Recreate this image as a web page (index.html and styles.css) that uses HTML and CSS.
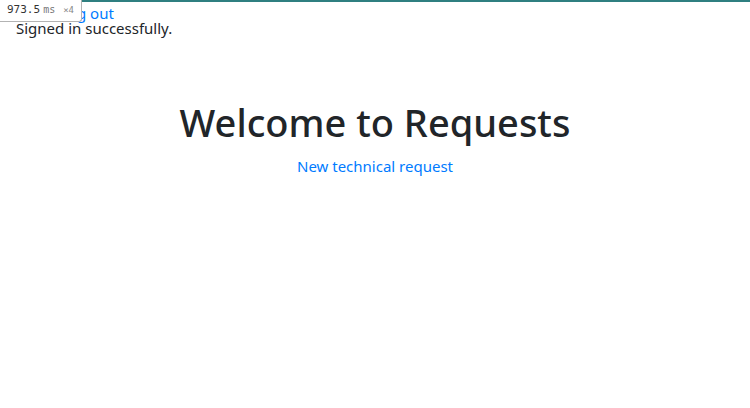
FILE: index.html
```html
<!DOCTYPE html>
<html>
<head>
<meta charset="utf-8">
<link rel="stylesheet" href="styles.css">
</head>
<body>
<div class="topline"></div>
<div class="profiler"><span class="ms-num">973.5</span><span class="ms-unit">ms</span><span class="ms-count">×4</span></div>
<div class="container">
  <nav class="nav"><a class="link" href="#">Log out</a></nav>
  <p class="notice">Signed in successfully.</p>
  <main class="hero">
    <h1 class="title">Welcome to Requests</h1>
    <a class="link link-main" href="#">New technical request</a>
  </main>
</div>
</body>
</html>
```
FILE: styles.css
```css
html, body { margin: 0; padding: 0; background: #fff; }
body {
  font-family: "Noto Sans", "Open Sans", sans-serif;
  font-size: 15px;
  line-height: 15px;
  color: #212529;
}
.topline { height: 2px; background: #2f7f80; }
.profiler {
  position: absolute;
  top: 0; left: 0;
  z-index: 1;
  display: flex;
  align-items: baseline;
  background: #fff;
  border-right: 1px solid #b3b3b3;
  border-bottom: 1px solid #b3b3b3;
  border-bottom-right-radius: 3px;
  padding: 3px 7px 4px 7px;
  height: 14px;
  font-family: "DejaVu Sans Mono", monospace;
  font-size: 11px;
  line-height: 14px;
  color: #333;
}
.ms-unit { color: #777; font-size: 10px; margin-left: 3px; }
.ms-count { color: #888; font-size: 9px; margin-left: 8px; }
.container { padding: 3px 16px 0; }
.nav { line-height: 16px; padding-left: 44px; }
.link { color: #007bff; text-decoration: none; display: inline-block; }
.notice { margin: 0; }
.hero { text-align: center; margin-top: 63px; }
.title {
  font-size: 38px;
  font-weight: 500;
  line-height: 46px;
  margin: 0 0 10px;
}
.link-main { line-height: 22px; }
```
